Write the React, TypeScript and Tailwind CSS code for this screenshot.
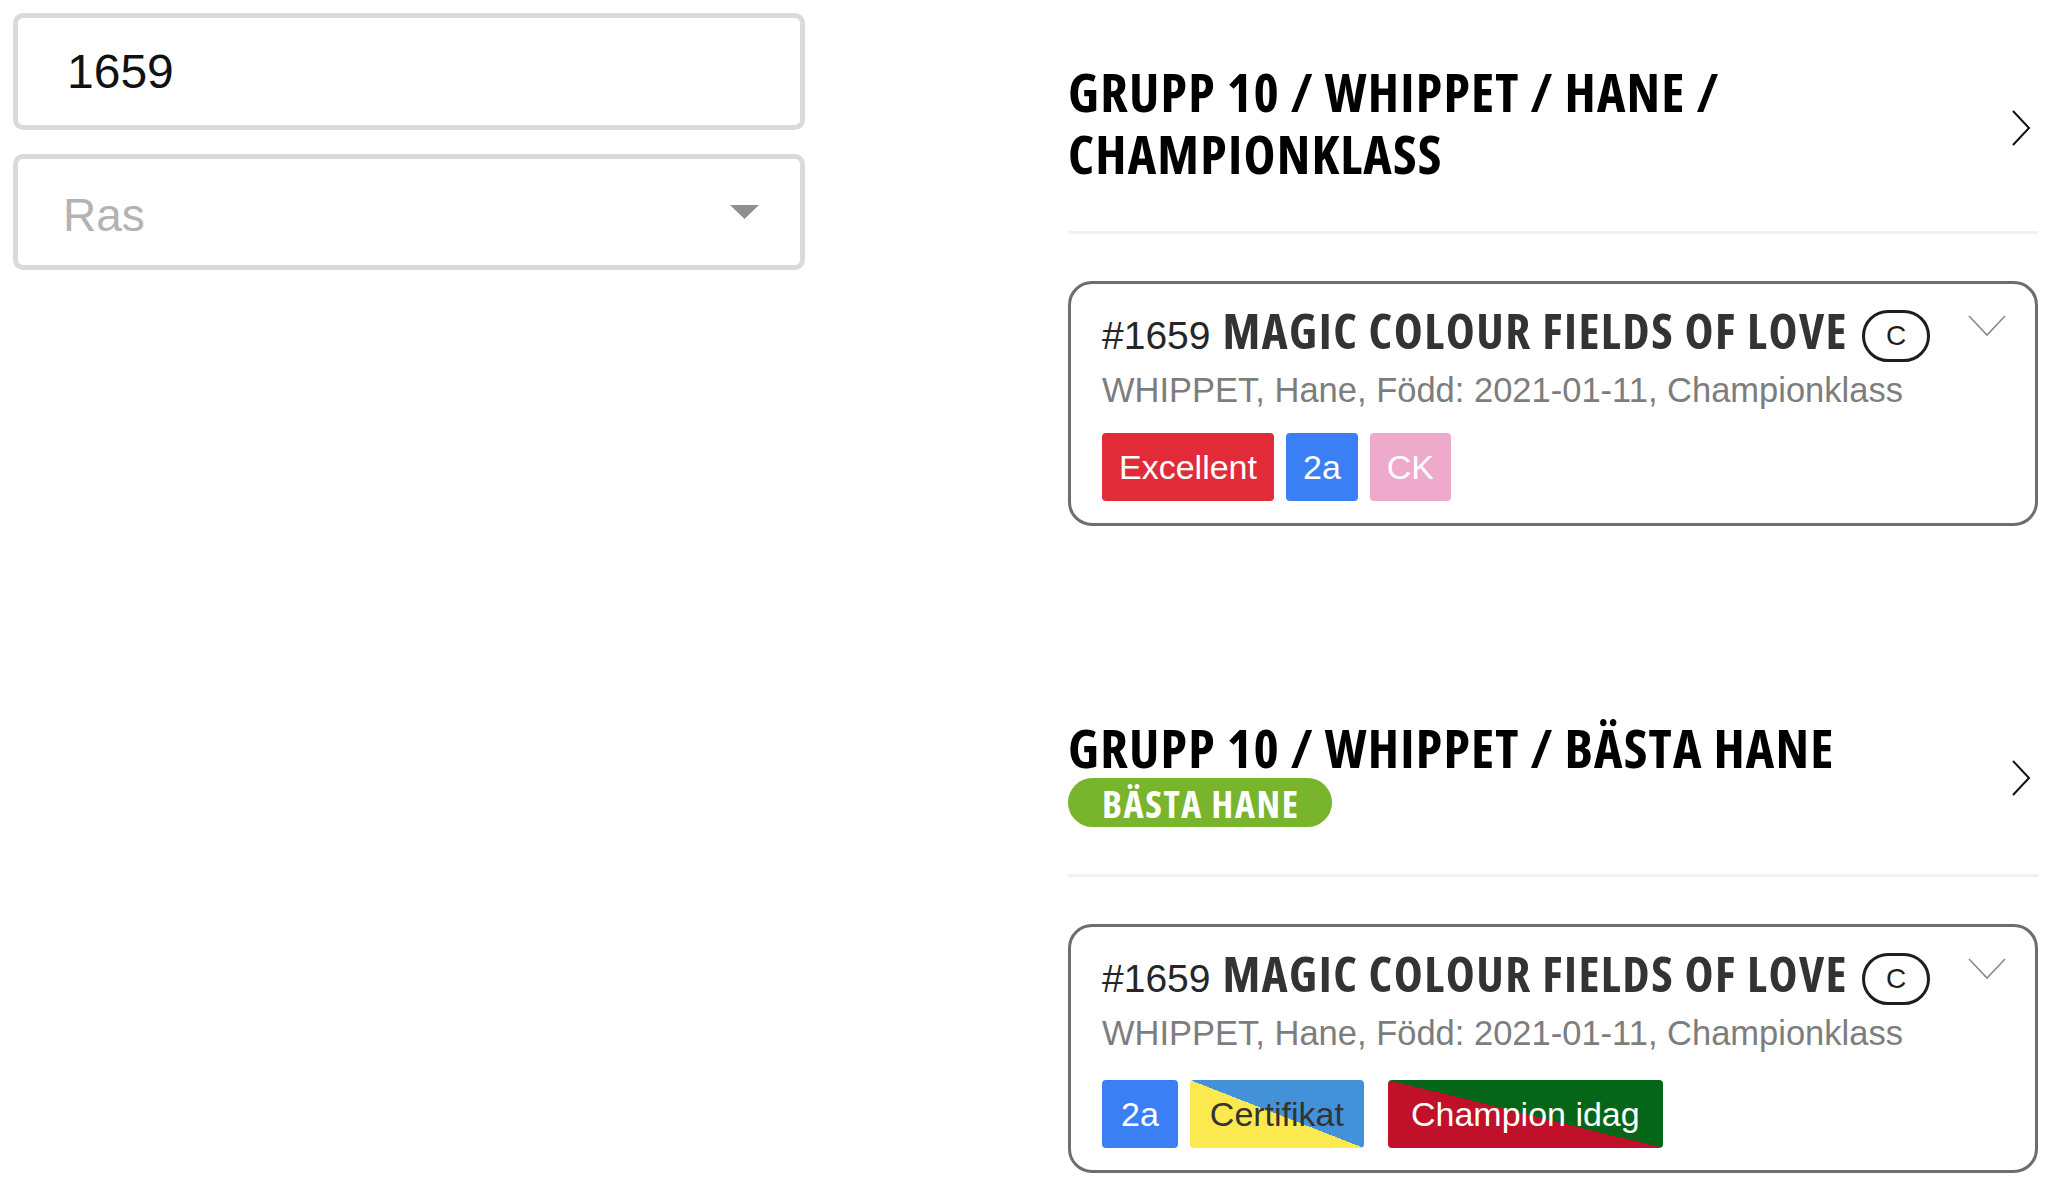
const sans = "font-['Liberation_Sans',Arial,sans-serif]";
const heading = "font-['Open_Sans','Liberation_Sans',sans-serif] font-bold font-stretch-condensed";

function ChevronRight() {
  return (
    <svg width="20" height="36" viewBox="0 0 20 36" className="mr-[7px] mt-[12px] shrink-0">
      <polyline points="2,1 18,18 2,35" fill="none" stroke="#111" strokeWidth="2" />
    </svg>
  );
}

function ChevronDown() {
  return (
    <svg width="38" height="22" viewBox="0 0 38 22" className="mt-[5px] shrink-0">
      <polyline points="1,1 19,20 37,1" fill="none" stroke="#8a8a8a" strokeWidth="1.6" />
    </svg>
  );
}

function Badge({ label, className }: { label: string; className: string }) {
  return (
    <span className={`flex h-[68px] items-center rounded-[4px] text-[34px] leading-none ${className}`}>
      {label}
    </span>
  );
}

function DogCard({ badges, badgesTop = 'mt-[21px]' }: { badges: React.ReactNode; badgesTop?: string }) {
  return (
    <div className="mt-[47px] flex rounded-[24px] border-[3px] border-[#6e6e6e] pl-[31px] pr-[29px] pt-[26px] pb-[22px]">
      <div className="min-w-0 flex-1">
        <div className="flex h-[52px] items-center">
          <div className="whitespace-nowrap leading-[52px]">
            <span className={`${sans} mr-[12px] text-[39px] text-[#262626]`}>#1659</span>
            <span className={`${heading} text-[49px] tracking-[1.5px] text-[#333]`}>
              MAGIC COLOUR FIELDS OF LOVE
            </span>
          </div>
          <span
            className={`${sans} ml-[14px] flex h-[52px] w-[68px] shrink-0 items-center justify-center rounded-full border-[3px] border-[#1e1e1e] text-[28px] text-[#1e1e1e]`}
          >
            C
          </span>
        </div>
        <div className={`${sans} mt-[6px] text-[34.5px] leading-[44px] text-[#7d7d7d]`}>
          WHIPPET, Hane, Född: 2021-01-11, Championklass
        </div>
        <div className={`${sans} ${badgesTop} flex gap-3`}>{badges}</div>
      </div>
      <ChevronDown />
    </div>
  );
}

function GroupHeader({ children }: { children: React.ReactNode }) {
  return (
    <div className="flex items-center border-b-[3px] border-[#f1f1f1] pb-[47px]">
      <div className="min-w-0 flex-1 pr-[40px]">{children}</div>
      <ChevronRight />
    </div>
  );
}

export default function App() {
  return (
    <div className="flex min-h-[1186px] w-full bg-white">
      <div className="flex w-[805px] shrink-0 flex-col gap-6 pl-[13px] pt-[13px]">
        <div className="flex h-[117px] items-center rounded-[10px] border-[5px] border-[#d9dadd] pl-[49px]">
          <span className={`${sans} text-[48px] text-[#111]`}>1659</span>
        </div>
        <div className="flex h-[116px] items-center justify-between rounded-[10px] border-[5px] border-[#d9dadd] pl-[45px] pr-[41px]">
          <span className={`${sans} pt-[6px] text-[46px] text-[#b3b3b3]`}>Ras</span>
          <svg width="29" height="14" viewBox="0 0 29 14">
            <polygon points="0,0 29,0 14.5,14" fill="#8f8f8f" />
          </svg>
        </div>
      </div>

      <div className="ml-[263px] mr-[9px] min-w-0 flex-1 pt-[60px]">
        <GroupHeader>
          <h2 className={`${heading} text-[54px] leading-[62px] tracking-[1.2px] text-black`}>
            GRUPP 10 / WHIPPET / HANE / CHAMPIONKLASS
          </h2>
        </GroupHeader>
        <DogCard
          badges={
            <>
              <Badge label="Excellent" className="bg-[#e22b38] px-[17px] text-white" />
              <Badge label="2a" className="bg-[#3b7ff5] px-[17px] text-white" />
              <Badge label="CK" className="bg-[#eeaacb] px-[17px] text-white" />
            </>
          }
        />

        <div className="mt-[190px]">
          <GroupHeader>
            <h2 className={`${heading} text-[54px] leading-[62px] tracking-[1.2px] text-black`}>
              GRUPP 10 / WHIPPET / BÄSTA HANE
            </h2>
            <span
              className={`${heading} inline-flex h-[49px] items-center rounded-full bg-[#78b42c] pl-[34px] pr-[32px] text-[38px] leading-none tracking-[1.6px] text-white`}
            >
              BÄSTA HANE
            </span>
          </GroupHeader>
        </div>
        <DogCard
          badgesTop="mt-[25px]"
          badges={
            <>
              <Badge label="2a" className="bg-[#3b7ff5] px-[19px] text-white" />
              <Badge
                label="Certifikat"
                className="bg-[linear-gradient(to_top_right,#fbe94f_50%,#4291d9_50%)] px-[20px] text-[#333]"
              />
              <Badge
                label="Champion idag"
                className="ml-3 bg-[linear-gradient(to_top_right,#c0102a_50%,#056619_50%)] px-[23px] text-white"
              />
            </>
          }
        />
      </div>
    </div>
  );
}
